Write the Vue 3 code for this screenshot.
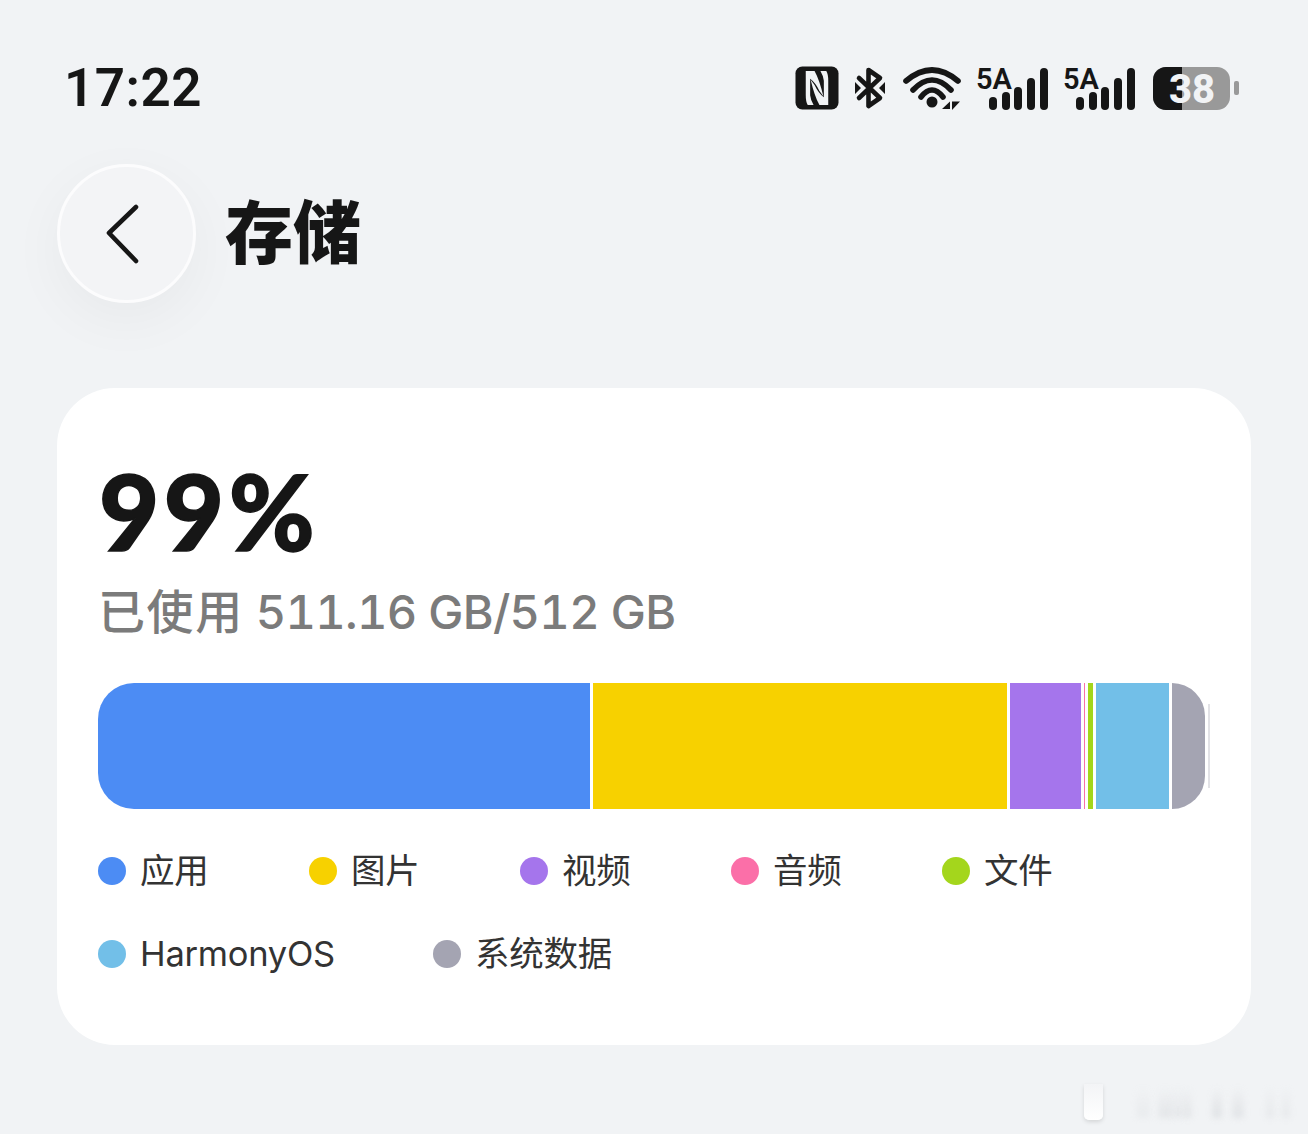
<template>
  <div class="page">
    <div class="status-bar">
      <span class="time">17:22</span>
      <div class="status-icons">
        <svg class="nfc" width="44" height="44" viewBox="0 0 45 45">
          <rect x="0.5" y="0.5" width="44" height="44" rx="7" fill="#161616" />
          <path d="M11 5 L20 5 Q25 14 29 31 L25 25.5 Q21 17 15.5 13 L15.5 30 Q16 35 19 40 L13 40 Q11 37 11 30 Z" fill="#f1f3f5" />
          <path d="M11 5 L20 5 Q25 14 29 31 L25 25.5 Q21 17 15.5 13 L15.5 30 Q16 35 19 40 L13 40 Q11 37 11 30 Z" fill="#f1f3f5" transform="rotate(180 22.5 22.5)" />
        </svg>
        <svg class="bt" width="30" height="44" viewBox="0 0 30 44">
          <path d="M4 12 L25 32 L13.5 40 L13.5 4 L25 12 L4 32" fill="none" stroke="#161616" stroke-width="4.6" stroke-linecap="round" stroke-linejoin="round" />
          <path d="M0 16 L6 22 L0 28 Z M30 16 L24 22 L30 28 Z" fill="#161616" />
        </svg>
        <svg class="wifi" width="58" height="44" viewBox="0 0 58 44">
          <path d="M3 15 Q29 -7 55 15" fill="none" stroke="#161616" stroke-width="5.6" stroke-linecap="round" />
          <path d="M10 24 Q29 4 48 24" fill="none" stroke="#161616" stroke-width="5.6" stroke-linecap="round" />
          <path d="M18 31 Q29 17 40 31" fill="none" stroke="#161616" stroke-width="5.6" stroke-linecap="round" />
          <circle cx="29" cy="36" r="5.5" fill="#161616" />
          <path d="M39 43 L47 35.5 L47 43 Z M49 35.5 L57 35.5 L49 44 Z" fill="#161616" />
        </svg>
        <div v-for="n in 2" :key="n" class="signal">
          <span class="signal-label">5A</span>
          <div class="signal-bars">
            <i v-for="h in signalBars" :key="h" :style="{ height: h + 'px' }"></i>
          </div>
        </div>
        <div class="battery">
          <div class="battery-body">
            <div class="battery-fill"></div>
            <span class="battery-num">38</span>
          </div>
          <div class="battery-nub"></div>
        </div>
      </div>
    </div>

    <div class="header">
      <div class="back-btn">
        <svg width="36" height="60" viewBox="0 0 36 60">
          <path d="M31 3 L4 29 L31 57" fill="none" stroke="#161616" stroke-width="4.6" stroke-linecap="round" stroke-linejoin="round" />
        </svg>
      </div>
      <h1 class="title">存储</h1>
    </div>

    <div class="card">
      <div class="percent">99%</div>
      <div class="used"><span class="used-label">已使用</span> 511.16 GB/512 GB</div>
      <div class="bar">
        <div v-for="s in segments" :key="s.color" class="seg" :style="{ width: s.width + 'px', background: s.color }"></div>
        <div class="seg-end"></div>
      </div>
      <div class="legend">
        <div v-for="item in legend" :key="item.name" class="legend-item">
          <span class="dot" :style="{ background: item.color }"></span>
          <span class="legend-text">{{ item.name }}</span>
        </div>
      </div>
    </div>

    <div class="watermark">
      <span v-for="(m, i) in watermark" :key="i" class="mark" :style="{ left: m.x + 'px', width: m.w + 'px', opacity: m.o }"></span>
      <span class="mark-bright"></span>
    </div>
  </div>
</template>

<script setup>
const signalBars = [13, 18, 23, 32, 42]

const segments = [
  { width: 492, color: '#4c8cf4' },
  { width: 414, color: '#f7d100' },
  { width: 71, color: '#a575ec' },
  { width: 1, color: '#fb6fa8' },
  { width: 5, color: '#a4d61c' },
  { width: 73, color: '#72bfe8' },
  { width: 33, color: '#a4a4b2' }
]

const legend = [
  { name: '应用', color: '#4c8cf4' },
  { name: '图片', color: '#f7d100' },
  { name: '视频', color: '#a575ec' },
  { name: '音频', color: '#fb6fa8' },
  { name: '文件', color: '#a4d61c' },
  { name: 'HarmonyOS', color: '#72bfe8' },
  { name: '系统数据', color: '#a4a4b2' }
]

const watermark = [
  { x: 76, w: 14, o: 0.35 },
  { x: 98, w: 14, o: 0.6 },
  { x: 112, w: 12, o: 0.5 },
  { x: 124, w: 8, o: 0.6 },
  { x: 152, w: 10, o: 0.8 },
  { x: 172, w: 12, o: 0.7 },
  { x: 206, w: 8, o: 0.5 },
  { x: 222, w: 8, o: 0.5 }
]
</script>

<style scoped>
.page {
  position: relative;
  width: 1308px;
  height: 1134px;
  overflow: hidden;
  box-sizing: border-box;
  padding: 0 57px;
  background: #f1f3f5;
  color: #161616;
  font-family: "Noto Sans CJK SC", "Noto Sans", sans-serif;
}

.status-bar {
  display: flex;
  justify-content: space-between;
  align-items: center;
  height: 176px;
  padding: 0 12px 0 7px;
  margin-bottom: -12px;
}

.time {
  font-family: Roboto, sans-serif;
  font-size: 53px;
  font-weight: 600;
  letter-spacing: 0.5px;
}

.status-icons {
  display: flex;
  align-items: center;
}

.nfc {
  margin-right: 16px;
}

.bt {
  margin-right: 18px;
}

.wifi {
  margin-right: 15px;
}

.signal {
  position: relative;
  width: 72px;
  height: 44px;
  margin-right: 15px;
}

.signal-label {
  position: absolute;
  left: 0;
  top: -2px;
  font-family: Roboto, sans-serif;
  font-size: 29px;
  font-weight: 600;
  line-height: 30px;
}

.signal-bars {
  position: absolute;
  right: 0;
  bottom: 0;
  display: flex;
  align-items: flex-end;
  gap: 4.8px;
}

.signal-bars i {
  display: block;
  width: 8px;
  border-radius: 4px;
  background: #161616;
}

.battery {
  display: flex;
  align-items: center;
  gap: 4px;
  margin-left: 3px;
}

.battery-body {
  position: relative;
  width: 77px;
  height: 43px;
  border-radius: 13px;
  background: #999;
}

.battery-fill {
  width: 29px;
  height: 100%;
  border-radius: 13px 0 0 13px;
  background: #161616;
}

.battery-num {
  position: absolute;
  left: 16px;
  top: 1px;
  font-family: Roboto, sans-serif;
  font-size: 40px;
  font-weight: 800;
  line-height: 43px;
  color: #f1f3f5;
}

.battery-nub {
  width: 5px;
  height: 14px;
  border-radius: 2px;
  background: #999;
}

.header {
  display: flex;
  align-items: center;
  gap: 29px;
}

.back-btn {
  display: flex;
  align-items: center;
  justify-content: center;
  box-sizing: border-box;
  width: 139px;
  height: 139px;
  padding-right: 8px;
  border: 3px solid #fcfcfd;
  border-radius: 50%;
  background: #f3f4f6;
  box-shadow: 0 16px 56px rgba(0, 0, 0, 0.045);
}

.title {
  margin: 0 0 10px;
  font-size: 68px;
  font-weight: 900;
  line-height: 80px;
  color: #161616;
}

.card {
  box-sizing: border-box;
  width: 1194px;
  height: 657px;
  margin-top: 85px;
  padding: 63px 44px 0 41px;
  border-radius: 58px;
  background: #fff;
}

.percent {
  padding-left: 1px;
  font-family: Lato, sans-serif;
  font-size: 104px;
  font-weight: 900;
  line-height: 120px;
  letter-spacing: 4.5px;
  -webkit-text-stroke: 1.5px #161616;
  color: #161616;
}

.used {
  margin-top: 9px;
  font-family: Inter, "Noto Sans CJK SC", sans-serif;
  font-size: 47px;
  font-weight: 500;
  font-variant-numeric: tabular-nums;
  letter-spacing: -0.7px;
  line-height: 64px;
  color: #7b7b7b;
}

.used-label {
  letter-spacing: 1.6px;
}

.bar {
  display: flex;
  gap: 3px;
  width: 1112px;
  height: 126px;
  margin-top: 39px;
}

.seg {
  flex: none;
  height: 100%;
}

.seg:first-child {
  border-radius: 36px 0 0 36px;
}

.seg:nth-child(7) {
  border-radius: 0 36px 36px 0;
}

.seg-end {
  flex: none;
  align-self: center;
  width: 2px;
  height: 84px;
  background: #e2e2e6;
}

.legend {
  display: flex;
  flex-wrap: wrap;
  row-gap: 40px;
  column-gap: 98px;
  margin-top: 40px;
}

.legend-item {
  display: flex;
  align-items: center;
  gap: 14px;
  min-width: 113px;
  height: 43px;
}

.dot {
  flex: none;
  width: 28px;
  height: 28px;
  border-radius: 50%;
}

.legend-text {
  font-family: Inter, "Noto Sans CJK SC", sans-serif;
  font-size: 34.5px;
  letter-spacing: -0.25px;
  line-height: 43px;
  color: #333;
}

.watermark {
  position: absolute;
  left: 1060px;
  top: 1080px;
  width: 248px;
  height: 54px;
}

.mark {
  position: absolute;
  top: 6px;
  height: 32px;
  background: linear-gradient(to bottom, rgba(200, 202, 206, 0), rgba(200, 202, 206, 0.55));
  filter: blur(3px);
}

.mark-bright {
  position: absolute;
  left: 24px;
  top: 4px;
  width: 19px;
  height: 36px;
  border-radius: 0 0 5px 5px;
  background: linear-gradient(to bottom, #f3f4f6, #ffffff);
  box-shadow: 0 2px 4px rgba(0, 0, 0, 0.12);
}
</style>

<style>
html,
body {
  background: #f1f3f5;
}
</style>
